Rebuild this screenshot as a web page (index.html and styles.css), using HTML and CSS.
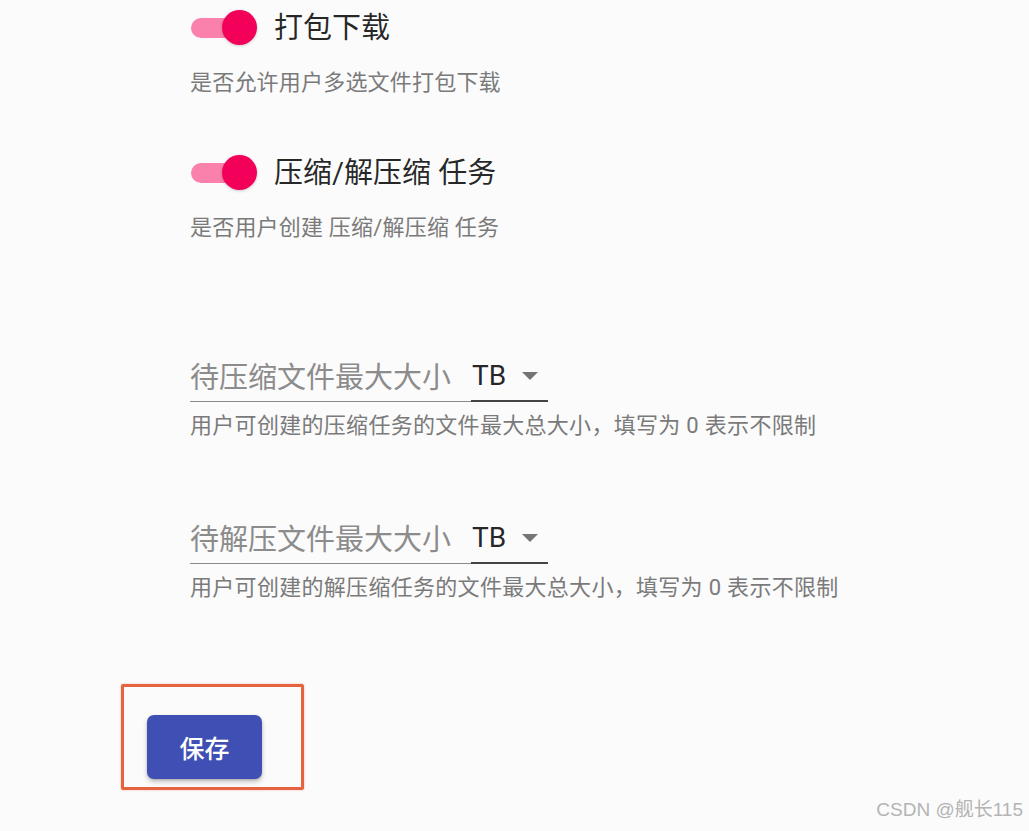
FILE: index.html
```html
<!DOCTYPE html>
<html lang="zh">
<head>
<meta charset="utf-8">
<link rel="stylesheet" href="styles.css">
</head>
<body>
<div class="page">
  <div class="settings">
    <div class="switch-row first">
      <span class="switch"><span class="track"></span><span class="thumb"></span></span>
      <span class="switch-label">打包下载</span>
    </div>
    <div class="desc">是否允许用户多选文件打包下载</div>

    <div class="switch-row second">
      <span class="switch"><span class="track"></span><span class="thumb"></span></span>
      <span class="switch-label">压缩/解压缩 任务</span>
    </div>
    <div class="desc">是否用户创建 压缩/解压缩 任务</div>

    <div class="field field-one">
      <div class="input-line">
        <span class="placeholder">待压缩文件最大大小</span>
        <span class="unit">TB<svg class="caret" width="20" height="10" viewBox="0 0 20 10"><path d="M2 1 L10 9 L18 1 Z" fill="#757575"/></svg></span>
      </div>
      <div class="helper">用户可创建的压缩任务的文件最大总大小，填写为 0 表示不限制</div>
    </div>

    <div class="field field-two">
      <div class="input-line">
        <span class="placeholder">待解压文件最大大小</span>
        <span class="unit">TB<svg class="caret" width="20" height="10" viewBox="0 0 20 10"><path d="M2 1 L10 9 L18 1 Z" fill="#757575"/></svg></span>
      </div>
      <div class="helper">用户可创建的解压缩任务的文件最大总大小，填写为 0 表示不限制</div>
    </div>
  </div>

  <div class="save-area">
    <div class="highlight">
      <button class="save-btn">保存</button>
    </div>
  </div>

  <div class="watermark">CSDN @舰长115</div>
</div>
</body>
</html>
```

FILE: styles.css
```css
html, body {
  margin: 0;
  padding: 0;
  background: #fbfbfb;
}
.page {
  width: 1029px;
  height: 831px;
  overflow: hidden;
  display: flex;
  flex-direction: column;
  font-family: Roboto, "Noto Sans CJK SC", sans-serif;
  color: rgba(0,0,0,0.87);
}
.settings {
  display: flex;
  flex-direction: column;
  padding-left: 190px;
}
.switch-row {
  display: flex;
  align-items: center;
  height: 40px;
  gap: 16px;
}
.switch-row.first { margin-top: 8px; }
.switch-row.second { margin-top: 56px; }
.switch {
  position: relative;
  width: 68px;
  height: 40px;
  flex: none;
}
.track {
  position: absolute;
  left: 1px;
  top: 10px;
  width: 58px;
  height: 20px;
  border-radius: 10px;
  background: #f981ab;
}
.thumb {
  position: absolute;
  left: 32px;
  top: 2px;
  width: 35px;
  height: 35px;
  border-radius: 50%;
  background: #f2005a;
  box-shadow: 0 1px 3px rgba(0,0,0,0.2);
}
.switch-label {
  font-size: 29px;
  line-height: 40px;
  color: rgba(0,0,0,0.85);
}
.desc {
  margin-top: 21px;
  font-size: 22px;
  line-height: 28px;
  color: #7a7a7a;
  letter-spacing: 0.2px;
}
.field {
  display: flex;
  flex-direction: column;
  width: 700px;
}
.field-one { margin-top: 111px; }
.field-two { margin-top: 75px; }
.input-line {
  display: flex;
  align-items: stretch;
  width: 358px;
}
.placeholder {
  display: flex;
  align-items: center;
  box-sizing: border-box;
  height: 49px;
  padding-bottom: 5px;
  width: 281px;
  flex: none;
  font-size: 29px;
  color: #8c8c8c;
  border-bottom: 1.5px solid #8a8a8a;
}
.unit {
  display: flex;
  align-items: center;
  gap: 14px;
  box-sizing: border-box;
  height: 49px;
  padding: 2px 0 5px 1px;
  flex: 1;
  font-size: 28px;
  color: rgba(0,0,0,0.87);
  border-bottom: 2px solid #444;
}
.caret { margin-top: 2px; }
.helper {
  margin-top: 10px;
  font-size: 22px;
  line-height: 28px;
  color: #7a7a7a;
  white-space: nowrap;
  letter-spacing: 0.3px;
}
.save-area {
  display: flex;
  padding-left: 121px;
  margin-top: 82px;
}
.highlight {
  width: 183px;
  height: 106px;
  border: 3px solid #e5633f;
  border-radius: 2px;
  display: flex;
  align-items: flex-start;
  padding: 28px 0 0 23px;
  box-sizing: border-box;
  box-shadow: 0 0 2px rgba(229,99,63,0.5);
}
.save-btn {
  width: 115px;
  height: 64px;
  border: none;
  border-radius: 7px;
  background: #3f4fb3;
  color: #fff;
  font-family: "Noto Sans CJK SC", sans-serif;
  font-size: 25px;
  font-weight: 500;
  box-shadow: 0 3px 5px rgba(0,0,0,0.22), 0 1px 2px rgba(0,0,0,0.15);
  cursor: pointer;
}
.watermark {
  align-self: flex-end;
  margin-top: 4px;
  margin-right: 6px;
  font-size: 19px;
  color: #b4b4b4;
  font-family: "Liberation Sans", "Noto Sans CJK SC", sans-serif;
}
```
